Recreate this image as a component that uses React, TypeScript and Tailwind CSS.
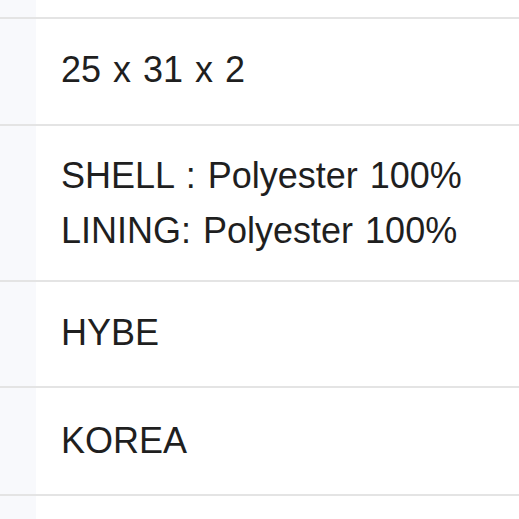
const rows = [
  { h: 'h-[105px]', pt: 'pt-[23px]', lines: ['25 x 31 x 2'] },
  { h: 'h-[154px]', pt: 'pt-[22px]', lines: ['SHELL : Polyester 100%', 'LINING: Polyester 100%'] },
  { h: 'h-[104px]', pt: 'pt-[23px]', lines: ['HYBE'] },
  { h: 'h-[106px]', pt: 'pt-[25px]', lines: ['KOREA'] },
];

function Row({ className, children }: { className: string; children?: React.ReactNode }) {
  return (
    <div className={`flex ${className}`}>
      <div className="w-[36px] shrink-0 bg-[#f8f9fc]" />
      <div className="flex-1 bg-white pl-[25px]">{children}</div>
    </div>
  );
}

export default function App() {
  return (
    <div
      className="w-[519px] h-[519px] overflow-hidden bg-white text-[#1f1f1f] text-[36px] leading-[55px] [word-spacing:2px]"
      style={{ fontFamily: '"Liberation Sans", Arial, sans-serif' }}
    >
      <Row className="h-[17px]" />
      {rows.map((r, i) => (
        <Row key={i} className={`border-t-2 border-[#e4e4e4] box-content ${r.h}`}>
          <div className={r.pt}>
            {r.lines.map((l) => (
              <div key={l}>{l}</div>
            ))}
          </div>
        </Row>
      ))}
      <Row className="border-t-2 border-[#e4e4e4] box-content h-[40px]" />
    </div>
  );
}
